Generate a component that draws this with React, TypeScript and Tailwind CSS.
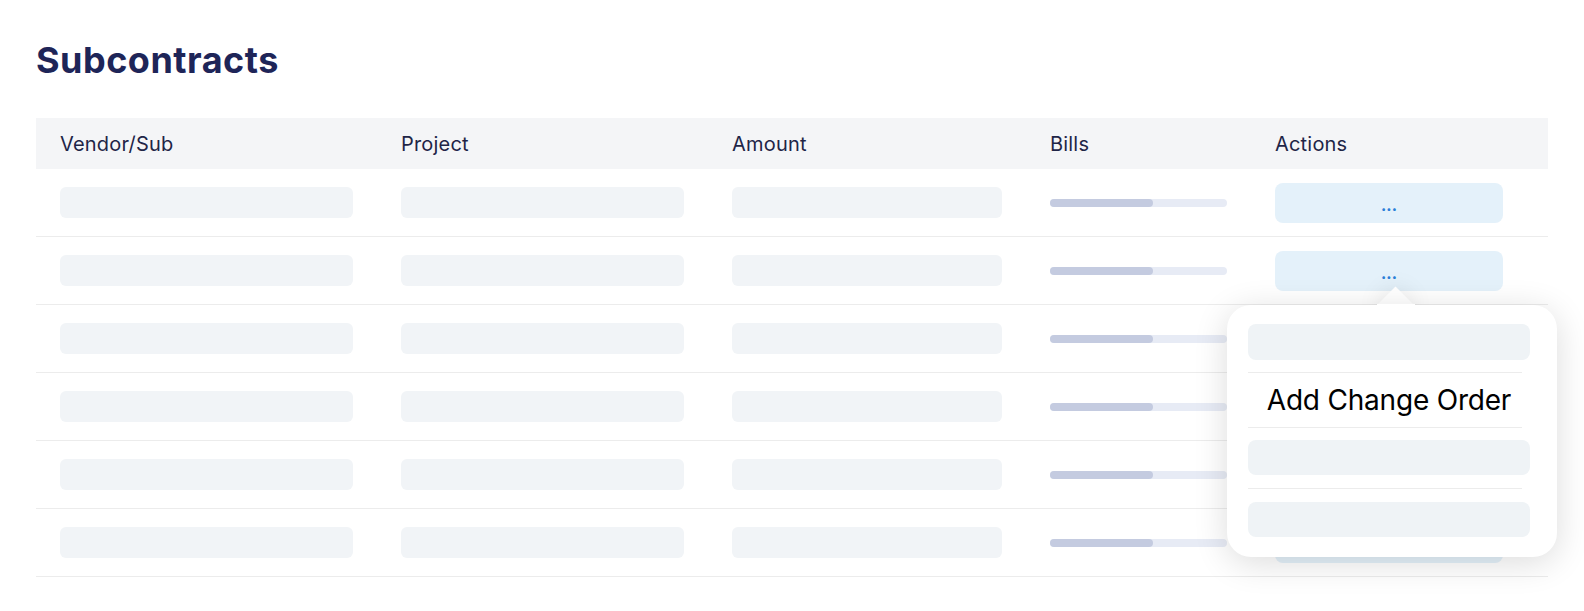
import React from "react";

const font = { fontFamily: "Inter, 'Noto Sans', sans-serif" };

function Row({ dots = true }: { dots?: boolean }) {
  return (
    <div className="grid grid-cols-[341px_331px_318px_225px_1fr] h-[68px] border-b border-[#ececec] items-center">
      <div className="px-6">
        <div className="h-[31px] rounded-[6px] bg-[#f1f4f7]" />
      </div>
      <div className="px-6">
        <div className="h-[31px] rounded-[6px] bg-[#f1f4f7]" />
      </div>
      <div className="px-6">
        <div className="h-[31px] rounded-[6px] bg-[#f1f4f7]" />
      </div>
      <div className="px-6">
        <div className="h-[8px] rounded-full bg-[#e7ebf5] flex">
          <div className="h-full w-[103px] rounded-full bg-[#c4cbe0]" />
        </div>
      </div>
      <div className="px-6">
        <div className="w-[228px] h-[40px] rounded-[8px] bg-[#e4f1fa] flex items-center justify-center text-[15px] font-extrabold text-[#2a7fd8] leading-none pt-[6px]">
          {dots ? "..." : null}
        </div>
      </div>
    </div>
  );
}

export default function App() {
  return (
    <div className="relative w-[1584px] h-[611px] bg-white overflow-hidden" style={font}>
      <div className="px-9 pt-[40px]">
        <h1 className="h-[41px] leading-[41px] text-[36px] font-bold text-[#1e2558] tracking-[0.5px]">
          Subcontracts
        </h1>
        <div className="mt-[37px]">
          <div className="grid grid-cols-[341px_331px_318px_225px_1fr] h-[51px] items-center bg-[#f4f5f7] text-[20px] text-[#1f2547] tracking-[0.2px]">
            <div className="px-6">Vendor/Sub</div>
            <div className="px-6">Project</div>
            <div className="px-6">Amount</div>
            <div className="px-6">Bills</div>
            <div className="px-6">Actions</div>
          </div>
          <Row />
          <Row />
          <Row dots={false} />
          <Row dots={false} />
          <Row dots={false} />
          <Row dots={false} />
        </div>
      </div>

      {/* Popover menu */}
      <div className="absolute left-[1227px] top-[287px] w-[330px]">
        <div className="absolute left-[155px] top-[5px] w-[27px] h-[27px] rotate-45 bg-white shadow-[0_0_24px_rgba(0,0,0,0.10)]" />
        <div className="relative mt-[18px] h-[252px] rounded-[24px] bg-white shadow-[0_6px_34px_rgba(0,0,0,0.14)] pl-[21px] pr-[27px] pt-[19px]">
          <div className="absolute left-[150px] -top-[1px] w-[38px] h-[14px] bg-white" />
          <div className="relative">
            <div className="h-[36px] rounded-[8px] bg-[#eff3f6]" />
            <div className="mt-[12px] mr-2 h-px bg-[#ececec]" />
            <div className="h-[54px] flex items-center justify-center text-[28px] text-black tracking-[-0.2px]">
              Add Change Order
            </div>
            <div className="mr-2 h-px bg-[#ececec]" />
            <div className="mt-[12px] h-[35px] rounded-[8px] bg-[#eff3f6]" />
            <div className="mt-[13px] mr-2 h-px bg-[#ececec]" />
            <div className="mt-[13px] h-[35px] rounded-[8px] bg-[#eff3f6]" />
          </div>
        </div>
      </div>
    </div>
  );
}
